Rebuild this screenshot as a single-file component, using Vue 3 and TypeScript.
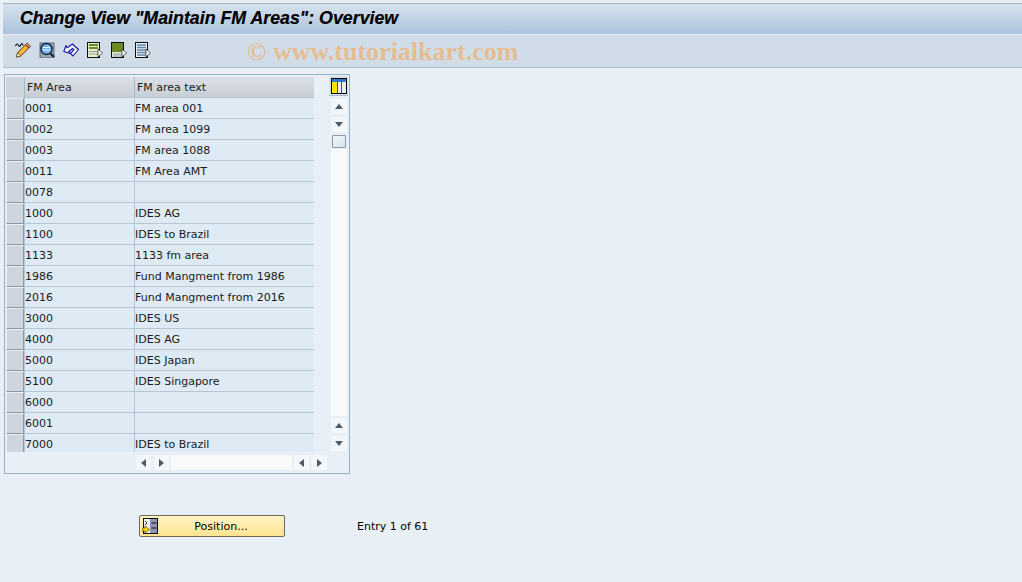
<script setup lang="ts">
const rows: [string, string][] = [
  ['0001', 'FM area 001'], ['0002', 'FM area 1099'], ['0003', 'FM area 1088'], ['0011', 'FM Area AMT'],
  ['0078', ''], ['1000', 'IDES AG'], ['1100', 'IDES to Brazil'], ['1133', '1133 fm area'],
  ['1986', 'Fund Mangment from 1986'], ['2016', 'Fund Mangment from 2016'], ['3000', 'IDES US'],
  ['4000', 'IDES AG'], ['5000', 'IDES Japan'], ['5100', 'IDES Singapore'], ['6000', ''], ['6001', ''],
  ['7000', 'IDES to Brazil'],
]
</script>

<template>
  <div class="page">
    <header class="title"><h1>Change View "Maintain FM Areas": Overview</h1></header>
    <div class="toolbar">
      <svg class="ic" viewBox="0 0 16 16" width="16" height="16">
        <path d="M0.500 4c1-3 2-2 3-.5s1.500 1 2.500-1 2 0 2 1" fill="none" stroke="#111" stroke-width="1.100"/>
        <path d="M1.500 15l1.200-4.500 7.800-7.800 3.300 3.300-7.800 7.800z" fill="#f6b73c" stroke="#4a3008" stroke-width=".9"/>
        <path d="M10.500 2.700l1.700-1.700 3.300 3.300-1.700 1.700z" fill="#e8837a" stroke="#4a3008" stroke-width=".8"/>
        <path d="M1.500 15l1.200-4.500 3.300 3.300z" fill="#fff3cf" stroke="#4a3008" stroke-width=".6"/>
      </svg>
      <svg class="ic" viewBox="0 0 16 16" width="16" height="16">
        <rect x="1" y="1" width="14" height="15" fill="#9aa6b2" stroke="#4a5560" stroke-width=".8"/>
        <circle cx="7.500" cy="7" r="5.500" fill="#6fb4f5" stroke="#10283e" stroke-width="1.400"/>
        <path d="M4 5.500h7M3.500 8h8" stroke="#fff" stroke-width="1.200"/>
        <path d="M11 11l4 4" stroke="#10283e" stroke-width="2.200"/>
      </svg>
      <svg class="ic" viewBox="0 0 16 16" width="16" height="16">
        <path d="M.8 9.500L3 3.500l1.200 2.300L9.500 2l6 5.500-5.500 6.500-2.500-2.300 3.500-4-1.500-1.200-3.700 3 1.500 2z" fill="#f0f5fb" stroke="#1414a0" stroke-width="1.100" stroke-linejoin="round"/>
      </svg>
      <svg class="ic" viewBox="0 0 16 16" width="16" height="16">
        <rect x=".5" y=".5" width="12" height="15" fill="#e6eed8" stroke="#111"/>
        <path d="M2 3h9M2 6h9" stroke="#6c8a22" stroke-width="2.200"/>
        <path d="M2 9.500h9M2 12h9" stroke="#8c9c80" stroke-width="1.200"/>
        <path d="M11 7l4.500 4-4.500 4z" fill="#fff" stroke="#333" stroke-width=".8"/>
      </svg>
      <svg class="ic" viewBox="0 0 16 16" width="16" height="16">
        <rect x=".5" y=".5" width="12" height="15" fill="#e6eed8" stroke="#111"/>
        <rect x="1" y="1" width="11" height="9" fill="#6c8a22"/>
        <path d="M2 12h9M2 14h9" stroke="#8aa0b0" stroke-width="1"/>
        <path d="M11 7l4.500 4-4.500 4z" fill="#fff" stroke="#333" stroke-width=".8"/>
      </svg>
      <svg class="ic" viewBox="0 0 16 16" width="16" height="16">
        <rect x=".5" y=".5" width="12" height="15" fill="#eef3f8" stroke="#111"/>
        <path d="M2 3h9M2 5.500h9M2 8h9M2 10.500h9M2 13h9" stroke="#5f86a8" stroke-width="1.300"/>
        <path d="M11 7l4.500 4-4.500 4z" fill="#fff" stroke="#333" stroke-width=".8"/>
      </svg>
      <span class="watermark">© www.tutorialkart.com</span>
    </div>

    <main class="content">
      <section class="frame">
        <div class="table-area">
          <div class="table">
            <div class="head">
              <div class="corner"></div>
              <div class="hcell c1">FM Area</div>
              <div class="hcell c2">FM area text</div>
            </div>
            <div v-for="r in rows" :key="r[0]" class="row">
              <div class="sel"></div>
              <div class="cell c1 code">{{ r[0] }}</div>
              <div class="cell c2">{{ r[1] }}</div>
            </div>
          </div>
          <div class="vbar">
            <div class="cfg">
              <svg viewBox="0 0 16 16" width="16" height="16">
                <rect x=".5" y=".5" width="15" height="15" fill="#f4f6f9" stroke="#000"/>
                <rect x="1" y="1" width="14" height="3" fill="#2f7fd0"/>
                <rect x="1" y="4" width="5" height="11" fill="#ffe100"/>
                <rect x="7" y="4" width="3" height="11" fill="#e6ecf2"/>
                <rect x="11" y="4" width="4" height="11" fill="#e6ecf2"/>
                <path d="M6.500 1v14M10.500 1v14" stroke="#555" stroke-width="1"/>
              </svg>
            </div>
            <div class="sbtn"><i class="tri up"></i></div>
            <div class="sbtn"><i class="tri down"></i></div>
            <div class="thumb"></div>
            <div class="track"></div>
            <div class="sbtn"><i class="tri up"></i></div>
            <div class="sbtn"><i class="tri down"></i></div>
          </div>
        </div>
        <div class="hbar">
          <div class="hbtn"><i class="tri left"></i></div>
          <div class="hbtn"><i class="tri right"></i></div>
          <div class="htrack"></div>
          <div class="hbtn"><i class="tri left"></i></div>
          <div class="hbtn"><i class="tri right"></i></div>
        </div>
      </section>

      <div class="actions">
        <button class="pos" type="button">
          <svg class="pos-ic" viewBox="0 0 16 16" width="16" height="16">
            <rect x="1.500" y=".5" width="14" height="15" fill="#8f95b8" stroke="#111"/>
            <rect x="2" y="1" width="6" height="14" fill="#eef0f6"/>
            <path d="M9.500 5h5M9.500 10h5" stroke="#111"/>
            <path d="M3 3l2 2-2 2" fill="none" stroke="#333"/>
            <path d="M0 10h3V8l4.500 3.500L3 15v-2H0z" fill="#ffd800" stroke="#5a4a00" stroke-width=".7"/>
          </svg>
          <span>Position...</span>
        </button>
        <span class="entry">Entry 1 of 61</span>
      </div>
    </main>
  </div>
</template>

<style>
html, body { margin: 0; background: #e8eff7; }
</style>

<style scoped>
.page {
  width: 1022px; height: 582px; overflow: hidden; box-sizing: border-box; padding: 3px 0 0 3px;
  background: #e8eff7; font-family: "DejaVu Sans", "Noto Sans", sans-serif; font-size: 11px; color: #000;
}
.title {
  height: 31px; box-sizing: border-box; border-top: 1px solid #a9b4bf; padding: 0 0 2px 17px;
  display: flex; align-items: center;
  background: linear-gradient(#d6e3ee, #acc2da);
}
h1 { margin: 0; font: italic bold 17.800px "Liberation Sans", Arial, sans-serif; color: #000; -webkit-text-stroke: .2px #000; }
.toolbar {
  position: relative; height: 34px; box-sizing: border-box; padding: 7px 0 0 12px;
  display: flex; gap: 8px; background: #d0dde9;
  border-top: 1px solid #e4ecf3; border-bottom: 1px solid #a6b9cb;
}
.ic { flex: none; }
.watermark {
  position: absolute; left: 244px; top: 2px;
  font: bold 26px "Liberation Serif", "Times New Roman", serif; color: #e6bd92; white-space: nowrap;
}
.content { padding: 6px 0 0 1px; }
.frame {
  width: 346px; height: 400px; box-sizing: border-box; border: 1px solid #98b1c8; background: #e8eff7;
  padding: 2px 2px 0 1px;
}
.table-area { display: flex; }
.table { width: 308px; height: 375px; overflow: hidden; flex: none; }
.head { display: flex; height: 21px; }
.corner { width: 18px; flex: none; box-sizing: border-box; background: #ced5dd; }
.hcell {
  box-sizing: border-box; padding-left: 2px; line-height: 21px; color: #222;
  background: linear-gradient(#dbe0e6, #c8ced5); border-left: 1px solid #aab6c2; border-bottom: 1px solid #b6c3cf;
}
.c1 { width: 110px; flex: none; }
.c2 { width: 180px; flex: none; }
.row { display: flex; height: 21px; background: #deeaf4; }
.sel {
  width: 18px; box-sizing: border-box; background: #ced5dd; flex: none;
  border: 1px solid #e8eef4; border-right-color: #8b98a5; border-bottom-color: #8b98a5;
}
.cell {
  box-sizing: border-box; padding-left: 0; line-height: 22px; white-space: nowrap;
  border-left: 1px solid #b7c6d4; border-bottom: 1px solid #b7c6d4; color: #1a1a1a;
}
.code { line-height: 21px; }
.vbar {
  width: 16px; height: 375px; margin: -1px 0 0 17px; flex: none;
  display: flex; flex-direction: column;
}
.cfg {
  width: 19px; height: 20px; margin-left: -2px; padding: 2px 0 0 2px; box-sizing: border-box; flex: none;
  border-bottom: 1px solid #aab6c2; background: #d6dfe8;
}
.cfg svg { display: block; }
.sbtn {
  width: 16px; height: 15px; flex: none; margin-top: 3px; background: #f4f7fa;
  display: flex; align-items: center; justify-content: center;
}
.thumb {
  width: 14px; height: 13px; flex: none; margin: 3px 0 0 1px; box-sizing: border-box;
  border: 1px solid #8d98a3; border-radius: 1px; background: linear-gradient(135deg, #f2f6fa, #d6e2ee);
}
.track { flex: 1; margin: 1px 0 -1px; background: #f7f9fb; }
.tri { width: 0; height: 0; display: block; border: 4px solid transparent; }
.tri.up { border-top: 0; border-bottom: 5px solid #4c5a68; }
.tri.down { border-bottom: 0; border-top: 5px solid #4c5a68; }
.tri.left { border-left: 0; border-right: 5px solid #4c5a68; }
.tri.right { border-right: 0; border-left: 5px solid #4c5a68; }
.hbar { display: flex; gap: 3px; margin: 3px 0 0 130px; height: 15px; }
.hbtn { width: 15px; background: #f4f7fa; display: flex; align-items: center; justify-content: center; }
.htrack { width: 121px; margin: 0 -1px; background: #f7f9fb; }
.actions { display: flex; align-items: center; margin: 41px 0 0 135px; }
.pos {
  position: relative; width: 146px; height: 22px; padding: 0; box-sizing: border-box; border: 1px solid #6f6a55; border-radius: 2px;
  background: linear-gradient(#fff3c4, #ffe592); font: inherit; color: #000; display: flex; align-items: center; justify-content: center;
}
.pos span { margin-left: 18px; }
.pos-ic { position: absolute; left: 2px; top: 2px; }
.entry { margin-left: 72px; }
</style>
